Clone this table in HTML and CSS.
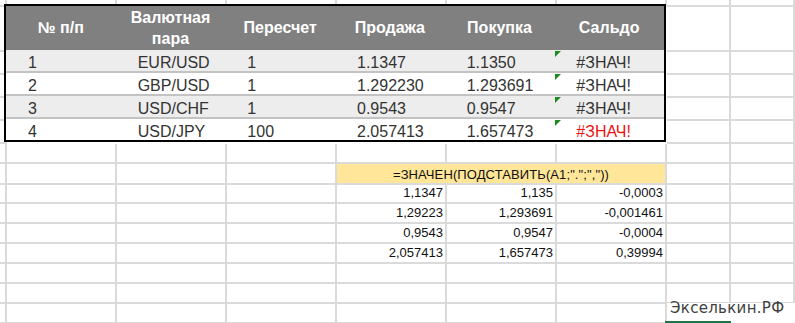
FILE: index.html
```html
<!DOCTYPE html>
<html lang="ru">
<head>
<meta charset="utf-8">
<title>Валютные пары</title>
<link rel="stylesheet" href="styles.css">
</head>
<body>
<div class="sheet">
  <div class="row r0">
    <div class="c"></div><div class="c"></div><div class="c"></div><div class="c"></div><div class="c"></div><div class="c"></div><div class="c"></div><div class="c"></div><div class="c"></div>
  </div>
  <div class="band">
    <div class="data">
      <div class="thead">
        <div class="th">№ п/п</div>
        <div class="th">Валютная<br>пара</div>
        <div class="th">Пересчет</div>
        <div class="th">Продажа</div>
        <div class="th">Покупка</div>
        <div class="th">Сальдо</div>
      </div>
      <div class="tr alt sep">
        <div class="td">1</div><div class="td">EUR/USD</div><div class="td">1</div><div class="td">1.1347</div><div class="td">1.1350</div><div class="td err">#ЗНАЧ!</div>
      </div>
      <div class="tr sep">
        <div class="td">2</div><div class="td">GBP/USD</div><div class="td">1</div><div class="td">1.292230</div><div class="td">1.293691</div><div class="td err">#ЗНАЧ!</div>
      </div>
      <div class="tr alt sep">
        <div class="td">3</div><div class="td">USD/CHF</div><div class="td">1</div><div class="td">0.9543</div><div class="td">0.9547</div><div class="td err">#ЗНАЧ!</div>
      </div>
      <div class="tr last">
        <div class="td">4</div><div class="td">USD/JPY</div><div class="td">100</div><div class="td">2.057413</div><div class="td">1.657473</div><div class="td err red">#ЗНАЧ!</div>
      </div>
    </div>
    <div class="c"></div><div class="c"></div><div class="c"></div>
    <div class="c"></div><div class="c"></div><div class="c"></div>
    <div class="c"></div><div class="c"></div><div class="c"></div>
    <div class="c"></div><div class="c"></div><div class="c"></div>
    <div class="c"></div><div class="c"></div><div class="c"></div>
  </div>
  <div class="row">
    <div class="c"></div><div class="c"></div><div class="c"></div><div class="c"></div><div class="c"></div><div class="c"></div><div class="c"></div><div class="c"></div><div class="c"></div>
  </div>
  <div class="row">
    <div class="c"></div><div class="c"></div><div class="c"></div><div class="c"></div>
    <div class="c f">=ЗНАЧЕН(ПОДСТАВИТЬ(A1;".";","))</div>
    <div class="c"></div><div class="c"></div>
  </div>
  <div class="row">
    <div class="c"></div><div class="c"></div><div class="c"></div><div class="c"></div>
    <div class="c v">1,1347</div><div class="c v">1,135</div><div class="c v">-0,0003</div>
    <div class="c"></div><div class="c"></div>
  </div>
  <div class="row">
    <div class="c"></div><div class="c"></div><div class="c"></div><div class="c"></div>
    <div class="c v">1,29223</div><div class="c v">1,293691</div><div class="c v">-0,001461</div>
    <div class="c"></div><div class="c"></div>
  </div>
  <div class="row">
    <div class="c"></div><div class="c"></div><div class="c"></div><div class="c"></div>
    <div class="c v">0,9543</div><div class="c v">0,9547</div><div class="c v">-0,0004</div>
    <div class="c"></div><div class="c"></div>
  </div>
  <div class="row">
    <div class="c"></div><div class="c"></div><div class="c"></div><div class="c"></div>
    <div class="c v">2,057413</div><div class="c v">1,657473</div><div class="c v">0,39994</div>
    <div class="c"></div><div class="c"></div>
  </div>
  <div class="row">
    <div class="c"></div><div class="c"></div><div class="c"></div><div class="c"></div><div class="c"></div><div class="c"></div><div class="c"></div><div class="c"></div><div class="c"></div>
  </div>
  <div class="row">
    <div class="c"></div><div class="c"></div><div class="c"></div><div class="c"></div><div class="c"></div><div class="c"></div><div class="c"></div><div class="c"></div><div class="c"></div>
  </div>
  <div class="row">
    <div class="c"></div><div class="c"></div><div class="c"></div><div class="c"></div><div class="c"></div><div class="c"></div><div class="c"></div><div class="c"></div><div class="c"></div>
  </div>
</div>
<div class="brand">Экселькин.РФ</div>
</body>
</html>
```

FILE: styles.css
```css
* { box-sizing: border-box; }
html, body { margin: 0; padding: 0; background: #fff; overflow: hidden; }
body {
  font-family: "Liberation Sans", Arial, sans-serif;
  width: 795px;
  height: 323px;
  position: relative;
}
.sheet {
  width: 795px;
  height: 323px;
  overflow: hidden;
  display: flex;
  flex-direction: column;
}
.row, .band {
  display: grid;
  grid-template-columns: 7px repeat(6, 110px) 64px 1fr;
  flex: none;
}
.row { height: 20px; }
.r0 { height: 7px; }
.band { grid-template-rows: 45px repeat(4, 23px); }
.c {
  border-right: 2px solid #dadada;
  border-bottom: 2px solid #dadada;
}

/* data table */
.data {
  grid-column: 2 / 8;
  grid-row: 1 / 6;
  margin: -3px 1px 2px -3px;
  border: 2px solid #000;
  background: #fff;
  display: flex;
  flex-direction: column;
  position: relative;
  z-index: 1;
}
.thead, .tr {
  display: grid;
  grid-template-columns: repeat(6, 1fr);
  flex: none;
}
.thead {
  height: 44px;
  background: #808080;
  color: #fff;
  font-weight: bold;
  font-size: 16px;
  line-height: 21.5px;
}
.th {
  display: flex;
  align-items: center;
  justify-content: center;
  text-align: center;
}
.tr {
  height: 23px;
  font-size: 16px;
  line-height: 21px;
  color: #333;
}
.tr.alt { background: #ededed; }
.tr.sep { border-bottom: 2px solid #c3c3c3; }
.tr.last { flex: 1; height: auto; }
.td {
  padding: 2px 0 0 22px;
  white-space: nowrap;
}
.err { position: relative; }
.err::before {
  content: "";
  position: absolute;
  left: 1px;
  top: 1px;
  width: 0;
  height: 0;
  border-top: 6px solid #1e8a1e;
  border-right: 6px solid transparent;
}
.red { color: #ee1111; }

/* lower calc area */
.f {
  grid-column: span 3;
  background: #ffe699;
  text-align: center;
  font-size: 13px;
  line-height: 16px;
  padding-top: 3px;
  color: #111;
  letter-spacing: 0.1px;
  white-space: nowrap;
}
.v {
  text-align: right;
  font-size: 13px;
  line-height: 16px;
  padding: 1px 2px 0 0;
  color: #111;
  white-space: nowrap;
}

/* watermark */
.brand {
  position: absolute;
  left: 667px;
  top: 303px;
  width: 128px;
  height: 20px;
  background: #fff;
  padding-left: 3px;
  font-family: "DejaVu Sans", sans-serif;
  font-size: 15px;
  line-height: 11px;
  letter-spacing: 0.3px;
  color: #404040;
  white-space: nowrap;
}
.brand::after {
  content: "";
  position: absolute;
  left: -2px;
  top: 18px;
  width: 66px;
  height: 2px;
  background: #217346;
}
```
